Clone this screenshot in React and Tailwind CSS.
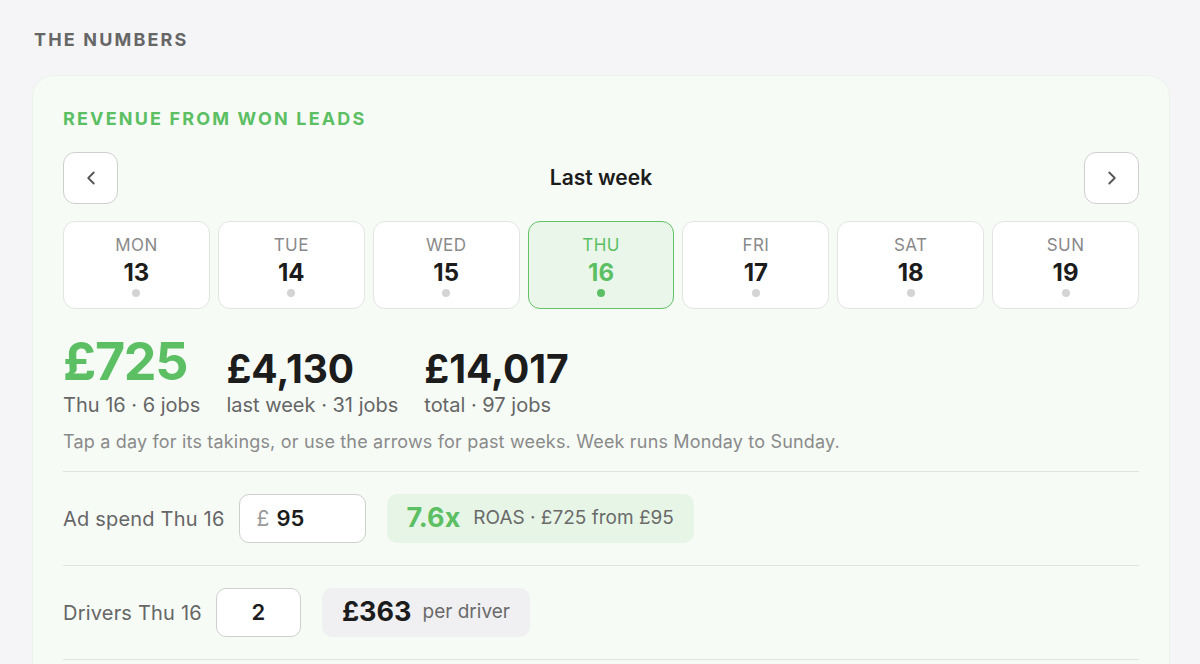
import React from 'react';
import { ChevronLeft, ChevronRight } from 'lucide-react';

const days = [
    { d: 'MON', n: 13 },
    { d: 'TUE', n: 14 },
    { d: 'WED', n: 15 },
    { d: 'THU', n: 16, active: true },
    { d: 'FRI', n: 17 },
    { d: 'SAT', n: 18 },
    { d: 'SUN', n: 19 },
];

const DayCard = ({ d, n, active }) => (
    <div
        className={
            active
                ? 'flex-1 h-[88px] rounded-xl border-[1.5px] border-[#62c267] bg-[#e9f6e9] flex flex-col items-center pt-[13px]'
                : 'flex-1 h-[88px] rounded-xl border border-[#e3e5e3] bg-white flex flex-col items-center pt-[13px]'
        }
    >
        <div className={active ? 'text-[17px] leading-[20px] tracking-wide text-[#5cbf63]' : 'text-[17px] leading-[20px] tracking-wide text-[#8a8a8a]'}>{d}</div>
        <div className={active ? 'text-[24px] leading-[36px] font-bold text-[#5cbf63]' : 'text-[24px] leading-[36px] font-bold text-[#1c1c1c]'}>{n}</div>
        <div className={active ? 'w-2 h-2 rounded-full bg-[#5cbf63] -mt-[2px]' : 'w-2 h-2 rounded-full bg-[#d4d4d4] -mt-[2px]'}></div>
    </div>
);

const Stat = ({ value, label, big }) => (
    <div className="flex flex-col">
        <div className={big ? 'text-[52px] leading-[63px] font-bold text-[#5cbf63] tracking-tight' : 'text-[39px] leading-[48px] font-bold text-[#1c1c1c]'}>{value}</div>
        <div className="text-[20px] leading-[25px] text-[#666]">{label}</div>
    </div>
);

export default function App() {
    return (
        <div className="min-h-[664px] bg-[#f5f5f7] pt-[28px] pl-[32px] pr-[30px] overflow-hidden" style={{ fontFamily: 'Inter, "Noto Sans", sans-serif' }}>
            <h2 className="pl-[2px] text-[18px] leading-[24px] font-bold tracking-[0.12em] text-[#666]">THE NUMBERS</h2>

            <div className="mt-[23px] rounded-[22px] border border-[#ecf3ec] bg-[#f6fbf6] px-[30px] pt-[30px] pb-[40px]">
                <div className="text-[18px] leading-[26px] font-bold tracking-[0.12em] text-[#5cbf63]">REVENUE FROM WON LEADS</div>

                <div className="mt-[20px] flex items-center justify-between">
                    <button className="w-[55px] h-[52px] rounded-xl border border-[#cfcfcf] bg-white flex items-center justify-center text-[#555]">
                        <ChevronLeft size={22} strokeWidth={2} />
                    </button>
                    <div className="text-[21px] font-semibold text-[#1c1c1c]">Last week</div>
                    <button className="w-[55px] h-[52px] rounded-xl border border-[#cfcfcf] bg-white flex items-center justify-center text-[#555]">
                        <ChevronRight size={22} strokeWidth={2} />
                    </button>
                </div>

                <div className="mt-[17px] flex gap-2">
                    {days.map((x) => (
                        <DayCard key={x.d} {...x} />
                    ))}
                </div>

                <div className="mt-[21px] flex items-end gap-[26px]">
                    <Stat big value="£725" label="Thu 16 · 6 jobs" />
                    <Stat value="£4,130" label="last week · 31 jobs" />
                    <Stat value="£14,017" label="total · 97 jobs" />
                </div>

                <p className="mt-[12px] text-[18px] leading-[24px] tracking-[0.01em] text-[#8a8a8a]">
                    Tap a day for its takings, or use the arrows for past weeks. Week runs Monday to Sunday.
                </p>

                <div className="mt-[17px] border-t border-[#e2e4e2]"></div>

                <div className="py-[22px] flex items-center">
                    <span className="text-[20px] tracking-[0.01em] text-[#666] mr-[14px]">Ad spend Thu 16</span>
                    <div className="w-[127px] h-[49px] rounded-[10px] border border-[#cfcfcf] bg-white flex items-center pl-[17px]">
                        <span className="text-[21px] text-[#999] mr-[7px]">£</span>
                        <span className="text-[22px] font-semibold text-[#1c1c1c]">95</span>
                    </div>
                    <div className="ml-[21px] h-[49px] rounded-[10px] bg-[#e7f5e7] flex items-center px-[20px]">
                        <span className="text-[27px] font-bold text-[#5cbf63] mr-[13px]">7.6x</span>
                        <span className="text-[19px] text-[#6a6a6a]">ROAS · £725 from £95</span>
                    </div>
                </div>

                <div className="border-t border-[#e2e4e2]"></div>

                <div className="py-[22px] flex items-center">
                    <span className="text-[20px] tracking-[0.01em] text-[#666] mr-[14px]">Drivers Thu 16</span>
                    <div className="w-[85px] h-[49px] rounded-[10px] border border-[#cfcfcf] bg-white flex items-center justify-center">
                        <span className="text-[22px] font-semibold text-[#1c1c1c]">2</span>
                    </div>
                    <div className="ml-[21px] h-[49px] rounded-[10px] bg-[#f0f0f3] flex items-center px-[20px]">
                        <span className="text-[27px] font-bold text-[#1c1c1c] mr-[11px]">£363</span>
                        <span className="text-[19px] text-[#6a6a6a]">per driver</span>
                    </div>
                </div>

                <div className="border-t border-[#e2e4e2]"></div>
            </div>
        </div>
    );
}
